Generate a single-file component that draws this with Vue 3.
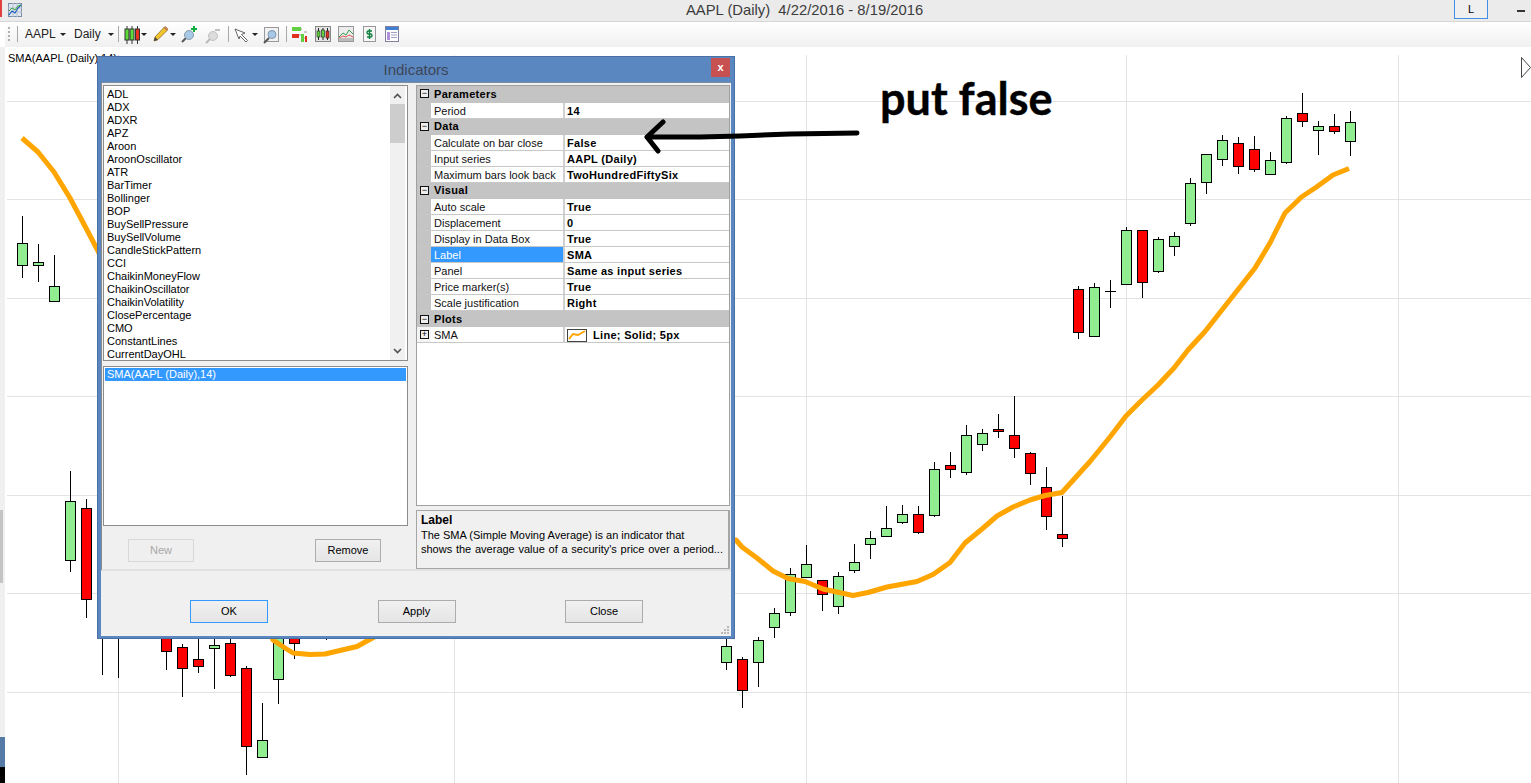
<script setup>
// [x, high, top, bottom, low, up]
const candles = [
  [22, 216, 243, 265, 278, 1], [38, 244, 262, 265, 282, 1], [54, 255, 286, 301, 301, 1],
  [70, 471, 501, 560, 572, 1], [86, 499, 508, 599, 618, 0], [102, 600, 610, 620, 675, 1],
  [118, 600, 610, 620, 678, 1], [166, 620, 630, 651, 670, 0], [182, 644, 647, 668, 697, 0],
  [198, 620, 659, 666, 673, 0], [214, 620, 645, 648, 689, 1], [230, 620, 643, 675, 677, 0],
  [246, 666, 668, 746, 775, 0], [262, 703, 740, 757, 757, 1], [278, 620, 625, 679, 704, 1],
  [294, 620, 630, 643, 659, 0], [326, 620, 625, 630, 640, 1],
  [726, 630, 646, 662, 670, 1], [742, 657, 659, 690, 708, 0], [758, 637, 640, 662, 687, 1],
  [774, 608, 613, 627, 638, 1], [790, 568, 574, 612, 616, 1], [806, 545, 564, 577, 578, 1],
  [822, 580, 580, 594, 611, 0], [838, 572, 576, 606, 614, 1], [854, 544, 562, 570, 573, 1],
  [870, 531, 538, 544, 559, 1], [886, 506, 528, 536, 536, 1], [902, 505, 514, 522, 524, 1],
  [918, 506, 514, 532, 534, 0], [934, 462, 469, 515, 517, 1], [950, 452, 465, 469, 478, 0],
  [966, 425, 435, 472, 475, 1], [982, 429, 433, 444, 451, 1], [998, 414, 429, 431, 438, 0],
  [1014, 396, 435, 448, 458, 0], [1030, 452, 453, 473, 485, 0], [1046, 467, 487, 516, 530, 0],
  [1062, 496, 534, 538, 547, 0], [1078, 286, 289, 332, 339, 0], [1094, 283, 287, 336, 336, 1],
  [1110, 280, 291, 291, 308, 2], [1126, 227, 230, 284, 284, 1], [1142, 230, 230, 282, 298, 0],
  [1158, 237, 239, 271, 273, 1], [1174, 232, 236, 246, 256, 1], [1190, 178, 183, 223, 226, 1],
  [1206, 154, 154, 182, 194, 1], [1222, 135, 140, 159, 166, 1], [1238, 137, 143, 166, 174, 0],
  [1254, 136, 149, 169, 172, 0], [1270, 152, 160, 174, 174, 1], [1286, 116, 118, 162, 164, 1],
  [1302, 93, 113, 121, 127, 0], [1318, 121, 126, 130, 155, 1], [1334, 114, 126, 131, 134, 0],
  [1350, 111, 122, 141, 156, 1]
]

const smaPoints = '22,138 38,152 54,172 70,198 86,228 100,255 273,640 285,648 293,653 310,654.5 325,654 357,646.5 376,636 ' +
  '736,540 742,547 757,558 773,571 788,578.5 805,581.5 823,589 853,595.5 868,592.5 887,587 917,581.5 933,574.5 950,562.5 ' +
  '965,543 982,529 997,516 1013,507 1030,500 1045,495.5 1062,492.5 1090,461.5 1110,437 1126,416 1142,400 1158,385 1174,368 ' +
  '1188,350 1205,331.5 1236.5,291.5 1255,268 1270,243 1285,213 1301.5,197 1316.5,187 1333,175 1349,168.5'

const hGrid = [101, 199, 298, 396, 495, 593, 692]
const vGrid = [118, 454, 806, 1126, 1398]

const winTitle = 'AAPL (Daily)  4/22/2016 - 8/19/2016'

const indicators = ['ADL', 'ADX', 'ADXR', 'APZ', 'Aroon', 'AroonOscillator', 'ATR', 'BarTimer', 'Bollinger', 'BOP',
  'BuySellPressure', 'BuySellVolume', 'CandleStickPattern', 'CCI', 'ChaikinMoneyFlow', 'ChaikinOscillator',
  'ChaikinVolatility', 'ClosePercentage', 'CMO', 'ConstantLines', 'CurrentDayOHL']

const sections = [
  { name: 'Parameters', rows: [['Period', '14']] },
  { name: 'Data', rows: [['Calculate on bar close', 'False'], ['Input series', 'AAPL (Daily)'], ['Maximum bars look back', 'TwoHundredFiftySix']] },
  { name: 'Visual', rows: [['Auto scale', 'True'], ['Displacement', '0'], ['Display in Data Box', 'True'], ['Label', 'SMA'],
    ['Panel', 'Same as input series'], ['Price marker(s)', 'True'], ['Scale justification', 'Right']] }
]
</script>

<template>
  <div class="page">
    <div class="titlebar">
      <span class="red-tab"></span>
      <svg class="app-icon" width="14" height="14" viewBox="0 0 14 14">
        <rect x=".5" y=".5" width="13" height="13" fill="#dfe6f0" stroke="#7a8ea8" />
        <path d="M0 5h14M0 9h14M5 0v14M9 0v14" stroke="#b4c0d0" fill="none" />
        <path d="M1 12l3-4 3 2 3-5 3-3" stroke="#1f5fc0" fill="none" stroke-width="1.2" />
        <path d="M1 8l3-3 3 2 3-4 3-1" stroke="#3aa83a" fill="none" />
      </svg>
      <span class="win-title">{{ winTitle }}</span>
      <span class="l-btn">L</span>
      <span class="minimize"></span>
    </div>

    <div class="toolbar">
      <span class="grip"></span>
      <span class="sep first"></span>
      <span class="tb-text">AAPL</span><span class="caret c-aapl"></span>
      <span class="tb-text daily">Daily</span><span class="caret c-daily"></span>
      <span class="sep s2"></span>
      <svg class="ico i-candle" width="17" height="18" viewBox="0 0 17 18">
        <path d="M3 0v18M8 0v18M13.500 0v18" stroke="#333" />
        <rect x="1" y="3" width="4" height="11" fill="#5fdc3c" stroke="#333" />
        <rect x="6" y="3" width="4" height="11" fill="#5fdc3c" stroke="#333" />
        <rect x="11.500" y="3" width="4" height="11" fill="#e8301c" stroke="#333" />
      </svg>
      <span class="caret c-a"></span>
      <svg class="ico i-pencil" width="16" height="16" viewBox="0 0 16 16">
        <path d="M1 15l1-4 9-9.500 3 3-9 9z" fill="#f4c430" stroke="#8a6a10" stroke-width=".8" />
        <path d="M11 1.500l3 3 1-1.500-2.500-2.500z" fill="#e88080" stroke="#8a6a10" stroke-width=".6" />
        <path d="M1 15l1-4 3 3z" fill="#444" />
      </svg>
      <span class="caret c-b"></span>
      <svg class="ico i-plus" width="17" height="17" viewBox="0 0 17 17">
        <path d="M1 16l5-5" stroke="#555" stroke-width="2" />
        <circle cx="8" cy="9" r="4.500" fill="#a8c8e8" stroke="#8a9aa8" />
        <path d="M13 0v6M10 3h6" stroke="#10b040" stroke-width="2" />
      </svg>
      <svg class="ico i-mag" width="16" height="16" viewBox="0 0 16 16">
        <path d="M1 15l5-5" stroke="#b8b8b8" stroke-width="2" />
        <circle cx="8" cy="8" r="4.500" fill="#dcdcdc" stroke="#c0c0c0" />
        <path d="M10 2h5" stroke="#c0c0c0" stroke-width="2" />
      </svg>
      <span class="sep s3"></span>
      <svg class="ico i-cursor" width="15" height="15" viewBox="0 0 15 15">
        <path d="M1 1l10 4-3.500 1.500 6 6-1.500 1.500-6-6L5 11z" fill="#fff" stroke="#555" stroke-width=".9" />
      </svg>
      <span class="caret c-c"></span>
      <svg class="ico i-zoom" width="16" height="17" viewBox="0 0 16 17">
        <rect x="1.500" y=".5" width="14" height="14" fill="#f2f2f2" stroke="#999" />
        <path d="M1 16l5-5" stroke="#555" stroke-width="2" />
        <circle cx="9" cy="7.500" r="4" fill="#a8c8e8" stroke="#7f95aa" />
      </svg>
      <span class="sep s4"></span>
      <svg class="ico i-a" width="16" height="16" viewBox="0 0 16 16">
        <path d="M1 3h9M1 9h9M12 6h3M12 12h3" stroke="#999" />
        <rect x="0" y="1" width="9" height="4" fill="#60d040" />
        <rect x="0" y="8" width="7" height="4" fill="#e03020" />
        <rect x="9" y="8" width="3" height="8" fill="#60d040" />
        <rect x="13" y="10" width="2" height="6" fill="#e03020" />
      </svg>
      <svg class="ico i-b" width="16" height="16" viewBox="0 0 16 16">
        <rect x=".5" y=".5" width="15" height="15" fill="#e4e4e4" stroke="#888" />
        <path d="M3.500 2v12M8 2v12M12.500 2v12" stroke="#222" />
        <rect x="2" y="5" width="3" height="6" fill="#60d040" stroke="#222" stroke-width=".6" />
        <rect x="6.500" y="4" width="3" height="7" fill="#60d040" stroke="#222" stroke-width=".6" />
        <rect x="11" y="5" width="3" height="7" fill="#e03020" stroke="#222" stroke-width=".6" />
      </svg>
      <svg class="ico i-c" width="16" height="16" viewBox="0 0 16 16">
        <rect x=".5" y=".5" width="15" height="15" fill="#ececec" stroke="#999" />
        <path d="M1 11l4-4 3 2 3-5 4 4" stroke="#30a050" fill="none" />
        <path d="M1 12l4-2 3 1 3-2 4 2" stroke="#e05050" fill="none" />
        <rect x="1" y="12" width="14" height="3" fill="#bbb" />
      </svg>
      <svg class="ico i-d" width="13" height="16" viewBox="0 0 13 16">
        <rect x=".5" y=".5" width="12" height="15" fill="#f6f6f6" stroke="#999" />
        <path d="M6.500 3v10M9 5H5.500a1.300 1.300 0 0 0 0 3h2a1.300 1.300 0 0 1 0 3H4" stroke="#108040" stroke-width="1.400" fill="none" />
      </svg>
      <svg class="ico i-e" width="14" height="16" viewBox="0 0 14 16">
        <rect x=".5" y=".5" width="13" height="15" fill="#fff" stroke="#8080a0" />
        <rect x="1" y="1" width="12" height="3" fill="#4080d0" />
        <rect x="2" y="6" width="3" height="8" fill="#b090d8" />
        <path d="M6 6.500h6M6 9h6M6 11.500h6" stroke="#a0a0c0" />
      </svg>
    </div>

    <div class="main">
      <div class="side">
        <span class="side-thumb"></span>
        <span class="side-blue"></span>
        <span class="side-black"></span>
      </div>
      <div class="chart">
        <svg class="chart-svg" width="1526" height="736" viewBox="5 47 1526 736">
          <g shape-rendering="crispEdges" stroke="#e3e3e3">
            <line v-for="y in hGrid" :key="'h' + y" x1="7" x2="1531" :y1="y + .5" :y2="y + .5" />
            <line v-for="x in vGrid" :key="'v' + x" :x1="x + .5" :x2="x + .5" y1="55" y2="783" />
          </g>
          <g shape-rendering="crispEdges" stroke="#000">
            <g v-for="c in candles" :key="c[0]">
              <line :x1="c[0] + .5" :x2="c[0] + .5" :y1="c[1]" :y2="c[4]" />
              <line v-if="c[5] === 2" :x1="c[0] - 5" :x2="c[0] + 6" :y1="c[2] + .5" :y2="c[2] + .5" />
              <rect v-else :x="c[0] - 4.5" :y="c[2] + .5" width="10" :height="c[3] - c[2]" :fill="c[5] ? '#90ee90' : '#ff0000'" />
            </g>
          </g>
          <polyline :points="smaPoints" fill="none" stroke="#ffa500" stroke-width="5" stroke-linejoin="round" />
          <path d="M1521.500 57.500v20l9-10z" fill="#fff" stroke="#444" />
        </svg>
        <span class="plot-label">SMA(AAPL (Daily),14)</span>
        <span class="note">put false</span>
      </div>
    </div>

    <div class="dialog">
      <div class="dlg-title">
        <span>Indicators</span>
        <button class="dlg-close">x</button>
      </div>
      <div class="dlg-panel">
        <div class="dlg-columns">
          <div class="left-col">
            <div class="list list-top">
              <div class="list-items">
                <div v-for="name in indicators" :key="name" class="list-item">{{ name }}</div>
              </div>
              <div class="scrollbar">
                <svg class="sb-arrow" width="15" height="18" viewBox="0 0 15 18"><path d="M4 12l3.500-3.500 3.500 3.500" fill="none" stroke="#505050" stroke-width="1.600" /></svg>
                <span class="sb-thumb"></span>
                <svg class="sb-arrow down" width="15" height="18" viewBox="0 0 15 18"><path d="M4 7l3.500 3.500 3.500-3.500" fill="none" stroke="#505050" stroke-width="1.600" /></svg>
              </div>
            </div>
            <div class="list list-bottom">
              <div class="selected-item">SMA(AAPL (Daily),14)</div>
            </div>
            <div class="left-buttons">
              <button class="btn small disabled">New</button>
              <button class="btn small">Remove</button>
            </div>
          </div>
          <div class="right-col">
            <div class="prop-grid">
              <template v-for="sec in sections" :key="sec.name">
                <div class="sec-row"><span class="box">−</span><b>{{ sec.name }}</b></div>
                <div v-for="row in sec.rows" :key="row[0]" class="prop-row">
                  <span class="gutter"></span>
                  <span class="prop-name" :class="{ active: row[0] === 'Label' }">{{ row[0] }}</span>
                  <span class="prop-val">{{ row[1] }}</span>
                </div>
              </template>
              <div class="sec-row plots"><span class="box">−</span><b>Plots</b></div>
              <div class="prop-row">
                <span class="gutter white"><span class="box">+</span></span>
                <span class="prop-name">SMA</span>
                <span class="prop-val">
                  <svg class="swatch" width="20" height="13" viewBox="0 0 20 13">
                    <rect x=".5" y=".5" width="19" height="12" fill="#fff" stroke="#444" />
                    <path d="M2 10l4-5 5 1 7-4" fill="none" stroke="#ffa500" stroke-width="2" />
                  </svg>
                  Line; Solid; 5px
                </span>
              </div>
            </div>
            <div class="help">
              <b>Label</b>
              <p>The SMA (Simple Moving Average) is an indicator that</p>
              <p class="wide">shows the average value of a security's price over a period...</p>
            </div>
          </div>
        </div>
        <div class="dlg-footer">
          <button class="btn focus">OK</button>
          <button class="btn">Apply</button>
          <button class="btn">Close</button>
        </div>
        <svg class="resize-grip" width="9" height="8" viewBox="0 0 9 8">
          <path d="M6 0h2v2H6zM3 3h2v2H3zM6 3h2v2H6zM0 6h2v2H0zM3 6h2v2H3zM6 6h2v2H6z" fill="#b8b8b8" />
        </svg>
      </div>
    </div>

    <!-- hand drawn arrow sits on top of the dialog -->
    <svg class="arrow" width="230" height="50" viewBox="635 112 230 50">
      <path d="M857 133L790 134L740 136L700 137L647 137M647 137L663 122M647 137L658 151" fill="none" stroke="#000" stroke-width="5" stroke-linecap="round" stroke-linejoin="round" />
    </svg>
  </div>
</template>

<style>
html, body {
  margin: 0;
  overflow: hidden;
  background: #fff;
}
</style>

<style scoped>
.page {
  position: relative;
  width: 1531px;
  height: 783px;
  overflow: hidden;
  font-family: "Liberation Sans", Arial, sans-serif;
  font-size: 11px;
  color: #000;
  background: #fff;
}

.titlebar {
  display: flex;
  align-items: flex-start;
  height: 21px;
  background: #ebebeb;
  border-bottom: 1px solid #d6d6d6;
}

.red-tab {
  width: 2px;
  height: 17px;
  background: #e04040;
}

.app-icon {
  margin: 3px 0 0 6px;
}

.win-title {
  margin: 2px 0 0 664px;
  font-size: 14.8px;
  line-height: 17px;
  color: #3c3c3c;
  white-space: pre;
}

.l-btn {
  width: 32px;
  height: 18px;
  margin-left: auto;
  border: 1px solid #3f8fe8;
  border-top: 0;
  font-size: 11px;
  line-height: 18px;
  text-align: center;
  background: #efefef;
}

.minimize {
  width: 8px;
  height: 2px;
  margin: 10px 6px 0 29px;
  background: #333;
}

.toolbar {
  position: relative;
  height: 25px;
  margin-left: 5px;
  background: linear-gradient(#fff, #f0f0f0);
}

/* toolbar strip items, x values are page x minus 5 */
.grip, .sep, .tb-text, .caret, .ico {
  position: absolute;
}

.grip {
  left: 3px;
  top: 5px;
  width: 2px;
  height: 14px;
  background: repeating-linear-gradient(#b0b0b0 0 2px, transparent 2px 4px);
}

.sep {
  top: 4px;
  width: 1px;
  height: 16px;
  background: #a8a8a8;
}
.sep.first { left: 12px; }
.sep.s2 { left: 113px; }
.sep.s3 { left: 223px; }
.sep.s4 { left: 281px; }

.tb-text {
  left: 20px;
  top: 5px;
  font-size: 12px;
  line-height: 15px;
  color: #222;
}
.tb-text.daily { left: 69px; }

.caret {
  top: 11px;
  width: 0;
  height: 0;
  border-left: 3px solid transparent;
  border-right: 3px solid transparent;
  border-top: 3px solid #222;
}
.c-aapl { left: 55px; }
.c-daily { left: 103px; }
.c-a { left: 136px; }
.c-b { left: 165px; }
.c-c { left: 247px; }

.i-candle { left: 119px; top: 4px; }
.i-pencil { left: 148px; top: 4px; }
.i-plus { left: 176px; top: 4px; }
.i-mag { left: 200px; top: 6px; }
.i-cursor { left: 229px; top: 6px; }
.i-zoom { left: 258px; top: 5px; }
.i-a { left: 287px; top: 4px; }
.i-b { left: 310px; top: 4px; }
.i-c { left: 333px; top: 4px; }
.i-d { left: 358px; top: 4px; }
.i-e { left: 380px; top: 4px; }

.main {
  display: flex;
  height: 736px;
}

.side {
  position: relative;
  width: 5px;
  background: #f0f0f0;
}

.side-thumb, .side-blue, .side-black {
  position: absolute;
  left: 0;
}
.side-thumb { top: 463px; width: 3px; height: 73px; background: #c4c4c4; }
.side-blue { top: 690px; width: 5px; height: 30px; background: #557aa6; }
.side-black { top: 720px; width: 5px; height: 16px; background: #000; }

.chart {
  position: relative;
  flex: 1;
}

.chart-svg {
  display: block;
}

.plot-label {
  position: absolute;
  left: 3px;
  top: 5px;
  line-height: 13px;
  white-space: nowrap;
}

.note {
  position: absolute;
  left: 875px;
  top: 21px;
  font-family: Lato, sans-serif;
  font-weight: 700;
  font-size: 45px;
  line-height: 60px;
  color: #000;
  white-space: nowrap;
  -webkit-text-stroke: .4px #000;
}

.arrow {
  position: absolute;
  left: 635px;
  top: 112px;
}

.dialog {
  position: absolute;
  left: 97px;
  top: 56px;
  width: 638px;
  height: 583px;
  box-sizing: border-box;
  padding: 0 3px 2px;
  display: flex;
  flex-direction: column;
  background: #5b87c1;
  border: 1px solid #4a70a6;
}

.dlg-title {
  position: relative;
  height: 25px;
  flex: none;
  display: flex;
  align-items: center;
  justify-content: center;
  font-size: 15px;
  color: #3c4656;
}

.dlg-close {
  position: absolute;
  right: 1px;
  top: 1px;
  width: 19px;
  height: 19px;
  padding: 0;
  border: 0;
  background: #c75050;
  color: #fff;
  font: bold 11px/17px "Liberation Sans", sans-serif;
}

.dlg-panel {
  position: relative;
  flex: 1;
  display: flex;
  flex-direction: column;
  background: #f0f0f0;
}

.dlg-columns {
  height: 489px;
  flex: none;
  box-sizing: border-box;
  padding: 2px 1px 0 1px;
  display: flex;
  gap: 8px;
  border-top: 1px solid #7c8ca4;
  border-left: 1px solid #8a8a8a;
  border-bottom: 2px solid #e2e2e2;
}

.left-col {
  width: 305px;
  flex: none;
  display: flex;
  flex-direction: column;
  gap: 5px;
}

.list {
  box-sizing: border-box;
  border: 1px solid #8c8c8c;
  background: #fff;
}

.list-top {
  height: 276px;
  display: flex;
}

.list-items {
  flex: 1;
  padding: 2px 0 0 3px;
  overflow: hidden;
}

.list-item {
  height: 13px;
  line-height: 13px;
  white-space: nowrap;
}

.scrollbar {
  width: 15px;
  margin-right: 2px;
  display: flex;
  flex-direction: column;
  background: #f0f0f0;
}

.sb-arrow {
  display: block;
  flex: none;
}
.sb-arrow.down { margin-top: auto; }

.sb-thumb {
  height: 39px;
  background: #cdcdcd;
}

.list-bottom {
  height: 160px;
  padding: 1px;
}

.selected-item {
  height: 13px;
  padding-left: 2px;
  line-height: 13px;
  background: #3399ff;
  color: #fff;
}

.left-buttons {
  display: flex;
  justify-content: space-between;
  padding: 8px 27px 0 25px;
}

.btn {
  width: 78px;
  height: 23px;
  padding: 0 0 1px;
  box-sizing: border-box;
  border: 1px solid #acacac;
  background: linear-gradient(#f0f0f0, #e5e5e5);
  color: #000;
  font: 11px/20px "Liberation Sans", sans-serif;
}
.btn.small { width: 66px; }
.btn.disabled { color: #a8a8a8; border-color: #d8d8d8; background: #efefef; }
.btn.focus { border-color: #3399ff; }

.right-col {
  width: 314px;
  flex: none;
  display: flex;
  flex-direction: column;
  gap: 4px;
}

.prop-grid {
  height: 421px;
  flex: none;
  box-sizing: border-box;
  border: 1px solid #a0a0a0;
  background: #fff;
}

.sec-row {
  height: 16px;
  box-sizing: border-box;
  padding-bottom: 2px;
  display: flex;
  align-items: center;
  background: #c4c4c4;
  line-height: 14px;
}
.sec-row:first-child {
  height: 17px;
}
.sec-row.plots {
  padding-bottom: 0;
}
.sec-row b {
  margin-left: 5px;
  letter-spacing: .3px;
}

.box {
  width: 7px;
  height: 7px;
  margin-left: 3px;
  border: 1px solid #111;
  display: inline-flex;
  align-items: center;
  justify-content: center;
  background: #eee;
  font: 9px/7px "Liberation Sans", sans-serif;
  flex: none;
}

.prop-row {
  height: 16px;
  box-sizing: border-box;
  display: flex;
  border-bottom: 1px solid #c8c8c8;
  line-height: 17px;
}

.gutter {
  width: 14px;
  flex: none;
  display: flex;
  align-items: center;
  background: #c4c4c4;
}
.gutter.white { background: #f4f4f4; }

.prop-name {
  width: 129px;
  flex: none;
  padding-left: 3px;
  border-right: 2px solid #d0d0d0;
  white-space: nowrap;
  color: #111;
}
.prop-name.active {
  background: #3399ff;
  color: #fff;
}

.prop-val {
  flex: 1;
  padding: 1px 0 0 2px;
  font-weight: 700;
  letter-spacing: .3px;
  line-height: 15px;
  white-space: nowrap;
  display: flex;
  align-items: center;
  gap: 6px;
}

.help {
  height: 59px;
  flex: none;
  box-sizing: border-box;
  padding: 2px 4px;
  border: 1px solid #a5a5a5;
  border-width: 1px 2px 1px 1px;
  line-height: 14px;
}
.help b {
  display: block;
  margin-bottom: 1px;
  font-size: 12px;
}
.help p {
  margin: 0;
  white-space: nowrap;
}
.help .wide {
  word-spacing: .7px;
}

.dlg-footer {
  flex: 1;
  display: flex;
  justify-content: space-between;
  padding: 29px 88px 0 89px;
  box-sizing: border-box;
}

.resize-grip {
  position: absolute;
  right: 1px;
  bottom: 2px;
}
</style>
